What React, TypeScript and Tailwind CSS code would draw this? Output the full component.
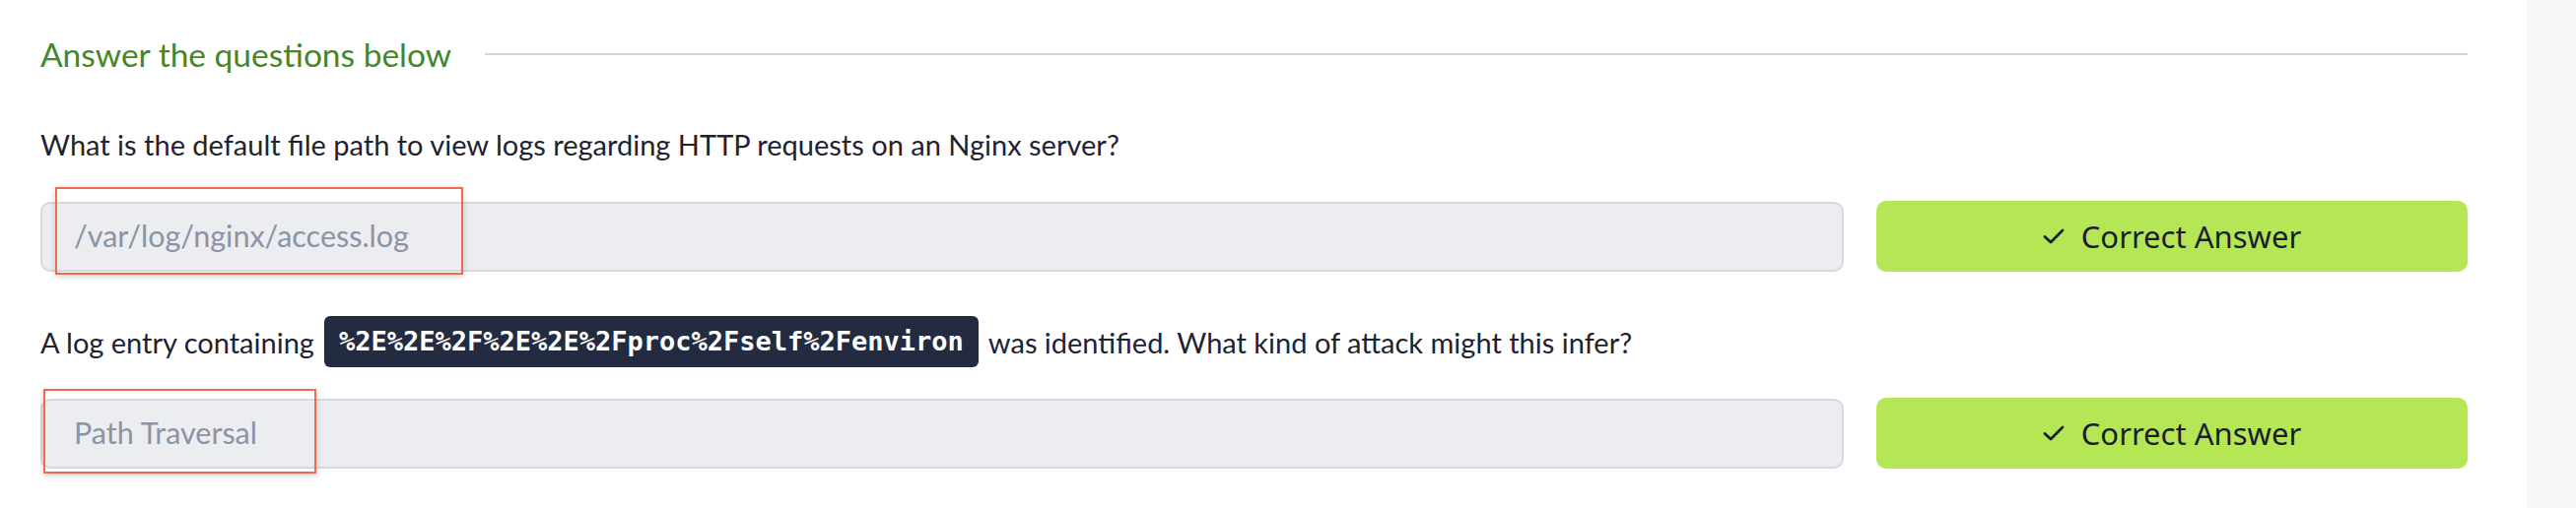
import React from "react";

function CheckMark() {
    return <svg width="22" height="16" viewBox="0 0 22 16" fill="none" className="shrink-0">
        <polyline points="2,8.5 8,14 20,2" stroke="#1b1d2b" strokeWidth="2.8" strokeLinecap="round" strokeLinejoin="round" />
    </svg>
}

function AnswerRow(props: { answer: string, box: string }) {
    return <div className="flex items-center">
        <div className="relative flex-1">
            <div className="flex items-center h-[71px] rounded-[10px] border-2 border-[#d6d8de] bg-[#ecedf1] pl-[32px] text-[30.5px] text-[#8b93a6]">
                {props.answer}
            </div>
            <div className={"absolute border-2 border-[#ef6b4f] shadow-[0_2px_6px_rgba(0,0,0,0.18)] " + props.box} />
        </div>
        <button className="ml-[33px] w-[600px] h-[72px] rounded-[10px] bg-[#b5e656] flex items-center justify-center gap-[17px] text-[31px] text-[#1b1d2b] font-['Noto_Sans',sans-serif]">
            <CheckMark />
            <span>Correct Answer</span>
        </button>
    </div>
}

export default function App() {
    return <div className="flex w-full h-[516px] bg-white font-['Lato',sans-serif]">
        <div className="flex-1 pl-[41px] pr-[60px] pt-[35px]">
            <div className="flex items-center h-[40px]">
                <h2 className="text-[33.5px] leading-[40px] text-[#44872a]">Answer the questions below</h2>
                <div className="flex-1 h-[2px] ml-[34px] bg-[#d2d6dc]" />
            </div>

            <p className="mt-[54px] text-[29px] leading-[35px] text-[#1f2330]">
                What is the default file path to view logs regarding HTTP requests on an Nginx server?
            </p>
            <div className="mt-[40px]">
                <AnswerRow answer="/var/log/nginx/access.log" box="left-[15px] -top-[15px] w-[414px] h-[89px]" />
            </div>

            <div className="mt-[45px] flex items-center text-[29px] leading-[35px] text-[#1f2330]">
                <span>A log entry containing</span>
                <code className="mx-[10px] rounded-[6px] bg-[#232b40] px-[15px] py-[10px] text-[27px] leading-[32px] font-bold text-white font-['DejaVu_Sans_Mono',monospace]">%2E%2E%2F%2E%2E%2Fproc%2Fself%2Fenviron</code>
                <span>was identified. What kind of attack might this infer?</span>
            </div>
            <div className="mt-[31px]">
                <AnswerRow answer="Path Traversal" box="left-[3px] -top-[10px] w-[277px] h-[86px]" />
            </div>
        </div>
        <div className="w-[50px] bg-[#f7f7f9]" />
    </div>
}
